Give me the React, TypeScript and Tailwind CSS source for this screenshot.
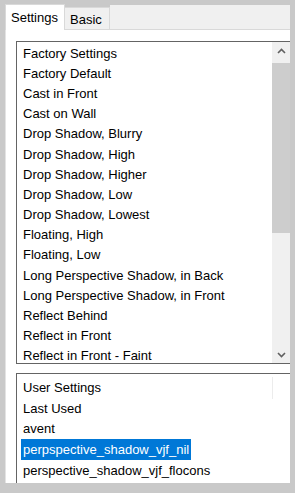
import React from "react";

const factory = [
  "Factory Settings",
  "Factory Default",
  "Cast in Front",
  "Cast on Wall",
  "Drop Shadow, Blurry",
  "Drop Shadow, High",
  "Drop Shadow, Higher",
  "Drop Shadow, Low",
  "Drop Shadow, Lowest",
  "Floating, High",
  "Floating, Low",
  "Long Perspective Shadow, in Back",
  "Long Perspective Shadow, in Front",
  "Reflect Behind",
  "Reflect in Front",
  "Reflect in Front - Faint",
];

const user = [
  "User Settings",
  "Last Used",
  "avent",
  "perpspective_shadow_vjf_nil",
  "perspective_shadow_vjf_flocons",
];

function Chevron({ up }: { up?: boolean }) {
  return (
    <svg width="9" height="6" viewBox="0 0 9 6">
      <path
        d={up ? "M1 5 L4.5 1.5 L8 5" : "M1 1 L4.5 4.5 L8 1"}
        fill="none"
        stroke="#606060"
        strokeWidth="1.6"
      />
    </svg>
  );
}

function Row({ label, selected }: { label: string; selected?: boolean }) {
  return (
    <div className="h-[20.2px] flex items-center pl-[4px] whitespace-nowrap">
      <span
        className={
          selected
            ? "px-[2px] h-[21px] flex items-center bg-[#0078d7] text-white"
            : "px-[2px] text-black"
        }
      >
        {label}
      </span>
    </div>
  );
}

export default function App() {
  return (
    <div
      className="w-[295px] h-[493px] bg-[#c9c9c9] px-[5px] pt-[4px] pb-[10px] flex flex-col text-[13px] leading-none overflow-hidden"
      style={{ fontFamily: '"Liberation Sans", Arial, sans-serif' }}
    >
      {/* Tabs */}
      <div className="flex items-end h-[26px] shrink-0">
        <div className="h-[26px] w-[60px] bg-white border-l border-t border-r border-[#d9d9d9] flex items-center pl-[5px] text-black">
          Settings
        </div>
        <div className="h-[23px] w-[45px] bg-[#f0f0f0] border-t border-r border-b border-[#d9d9d9] flex items-center pl-[5px] pt-[1px] text-black">
          Basic
        </div>
        <div className="h-[25px] flex-1 bg-[#f0f0f0] border-b border-[#d9d9d9]" />
      </div>

      {/* Panel */}
      <div className="flex-1 bg-white border-l border-[#e3e3e3] pl-[10px] pt-[11px] flex flex-col min-h-0 overflow-hidden">
        <div className="h-[323px] shrink-0 border-l border-t border-b border-[#646464] flex">
          <div className="flex-1 pt-[1px]">
            {factory.map((f) => (
              <Row key={f} label={f} />
            ))}
          </div>
          <div className="w-[18px] bg-[#f0f0f0] flex flex-col">
            <div className="h-[17px] flex items-center justify-center">
              <Chevron up />
            </div>
            <div className="h-[4px]" />
            <div className="h-[170px] bg-[#cdcdcd]" />
            <div className="flex-1" />
            <div className="h-[17px] flex items-center justify-center">
              <Chevron />
            </div>
          </div>
        </div>

        <div className="mt-[9px] flex-1 border-l border-t border-[#646464] pt-[3px] flex">
          <div className="flex-1 [&>div]:h-[20.7px]">
            {user.map((u, i) => (
              <Row key={u} label={u} selected={i === 3} />
            ))}
          </div>
          <div className="w-[18px] flex">
            <div className="w-px h-[22px] bg-[#ececec]" />
          </div>
        </div>
      </div>
    </div>
  );
}
